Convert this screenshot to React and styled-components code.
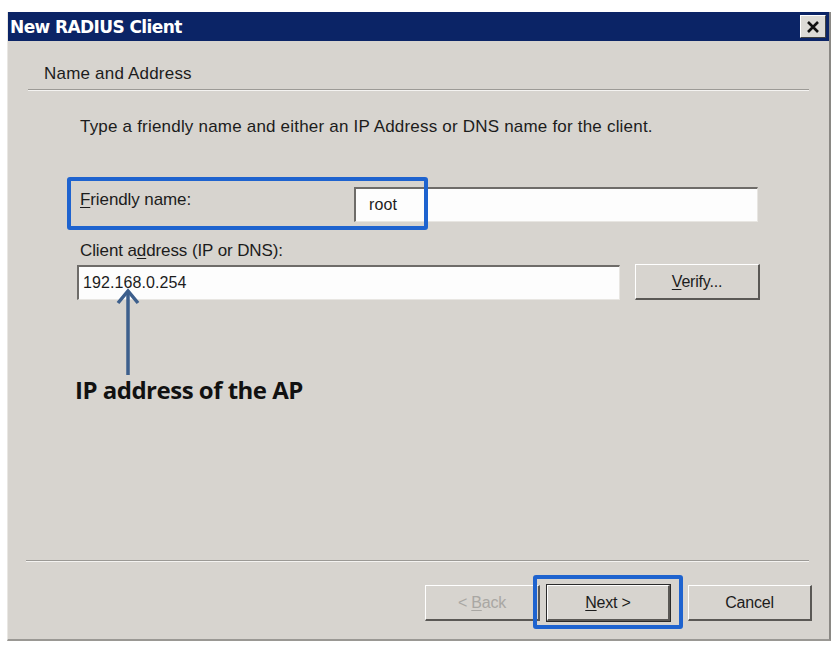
import React from 'react';
import styled, { createGlobalStyle } from 'styled-components';

const GlobalStyle = createGlobalStyle`
  html, body {
    margin: 0;
    padding: 0;
    background: #ffffff;
  }
  body {
    font-family: "Liberation Sans", Arial, sans-serif;
  }
`;

const Page = styled.div`
  padding: 12px 0 0 7px;
  width: 837px;
  height: 645px;
  box-sizing: border-box;
`;

const Window = styled.div`
  position: relative;
  width: 824px;
  height: 629px;
  box-sizing: border-box;
  background: #d7d4cf;
  border-left: 1px solid #e9e7e3;
  border-right: 2px solid #8a8884;
  border-bottom: 2px solid #9a9894;
  display: flex;
  flex-direction: column;
  color: #1c1c1c;
  font-size: 17px;
`;

const TitleBar = styled.div`
  height: 29px;
  background: #0b2466;
  display: flex;
  align-items: center;
  justify-content: space-between;
  padding: 0 3px 0 2px;
`;

const Title = styled.span`
  color: #ffffff;
  font-family: "DejaVu Sans", sans-serif;
  font-weight: bold;
  font-size: 17px;
  letter-spacing: -0.6px;
`;

const CloseButton = styled.div`
  width: 26px;
  height: 23px;
  box-sizing: border-box;
  background: #dcdad6;
  border-top: 1px solid #ffffff;
  border-left: 1px solid #ffffff;
  border-right: 1px solid #404040;
  border-bottom: 1px solid #404040;
  display: flex;
  align-items: center;
  justify-content: center;
`;

const Header = styled.div`
  height: 48px;
  display: flex;
  align-items: center;
  padding-left: 36px;
  padding-top: 17px;
  box-sizing: border-box;
  letter-spacing: 0.2px;
`;

const Separator = styled.div`
  margin: 0 20px 0 ${({ $left }) => $left}px;
  height: 0;
  border-top: 1px solid #9c9a96;
  border-bottom: 1px solid #f4f3f1;
`;

const Body = styled.div`
  flex: 1;
  padding: 26px 0 0 72px;
  display: flex;
  flex-direction: column;
`;

const Intro = styled.div`
  letter-spacing: 0.2px;
  margin-bottom: 50px;
`;

const NameRow = styled.div`
  display: flex;
  align-items: center;
  height: 35px;
`;

const Label = styled.div`
  width: 274px;
  letter-spacing: -0.1px;
  margin-top: ${({ $up }) => ($up ? '-9px' : '0')};
`;

const Underline = styled.span`
  text-decoration: underline;
  text-underline-offset: 2px;
`;

const TextField = styled.div`
  width: ${({ $width }) => $width}px;
  height: 35px;
  box-sizing: border-box;
  background: #fdfdfd;
  border-top: 2px solid #6e6c69;
  border-left: 2px solid #6e6c69;
  border-right: 1px solid #e8e6e2;
  border-bottom: 1px solid #e8e6e2;
  display: flex;
  align-items: center;
  padding-left: ${({ $pad }) => $pad}px;
  font-size: 16px;
  letter-spacing: 0.1px;
`;

const AddressLabel = styled(Label)`
  width: auto;
  margin: 19px 0 3px 0;
`;

const AddressRow = styled.div`
  display: flex;
  align-items: center;
  gap: 15px;
  margin-left: -3px;
`;

const Button = styled.div`
  width: ${({ $width }) => $width || 124}px;
  height: 36px;
  margin-left: ${({ $gap }) => $gap || 0}px;
  box-sizing: border-box;
  background: #d7d4cf;
  border-top: 1px solid #ffffff;
  border-left: 1px solid #ffffff;
  border-right: 2px solid #5a5855;
  border-bottom: 2px solid #5a5855;
  display: flex;
  align-items: center;
  justify-content: center;
  font-size: 16px;
  letter-spacing: -0.2px;
  color: ${({ $disabled }) => ($disabled ? '#a9a7a3' : '#1c1c1c')};
  ${({ $default }) => $default && 'outline: 1px solid #2a2a2a;'}
`;

const Footer = styled.div`
  height: 77px;
  display: flex;
  justify-content: flex-end;
  align-items: flex-start;
  padding: 23px 17px 0 0;
  box-sizing: border-box;
`;

const Highlight = styled.div`
  position: absolute;
  border: 4px solid #1e63cf;
  border-radius: 3px;
  box-sizing: border-box;
  pointer-events: none;
`;

const Arrow = styled.svg`
  position: absolute;
  left: 102px;
  top: 275px;
`;

const Callout = styled.div`
  position: absolute;
  left: 67px;
  top: 361px;
  font-family: "Open Sans", sans-serif;
  font-weight: 700;
  font-size: 24px;
  letter-spacing: -0.5px;
  color: #111111;
`;

const App = () => (
  <>
    <GlobalStyle />
    <Page>
      <Window>
        <TitleBar>
          <Title>New RADIUS Client</Title>
          <CloseButton>
            <svg width="14" height="12" viewBox="0 0 14 12">
              <path d="M2 1 L12 11 M12 1 L2 11" stroke="#111" strokeWidth="2.6" />
            </svg>
          </CloseButton>
        </TitleBar>
        <Header>Name and Address</Header>
        <Separator $left={20} />
        <Body>
          <Intro>Type a friendly name and either an IP Address or DNS name for the client.</Intro>
          <NameRow>
            <Label $up>
              <Underline>F</Underline>riendly name:
            </Label>
            <TextField $width={404} $pad={13}>root</TextField>
          </NameRow>
          <AddressLabel>
            Client a<Underline>d</Underline>dress (IP or DNS):
          </AddressLabel>
          <AddressRow>
            <TextField $width={543} $pad={4}>192.168.0.254</TextField>
            <Button $width={125}>
              <span>
                <Underline>V</Underline>erify...
              </span>
            </Button>
          </AddressRow>
        </Body>
        <Separator $left={18} />
        <Footer>
          <Button $width={115} $disabled>
            <span>
              &lt; <Underline>B</Underline>ack
            </span>
          </Button>
          <Button $width={123} $gap={7} $default>
            <span>
              <Underline>N</Underline>ext &gt;
            </span>
          </Button>
          <Button $width={124} $gap={18}>Cancel</Button>
        </Footer>

        <Highlight style={{ left: 59, top: 165, width: 361, height: 53 }} />
        <Highlight style={{ left: 525, top: 563, width: 150, height: 54 }} />
        <Arrow width="36" height="92" viewBox="0 0 36 92">
          <path d="M18 4 L18 88" stroke="#3d5f8c" strokeWidth="3.5" />
          <path d="M8 16 L18 4 L28 16" fill="none" stroke="#3d5f8c" strokeWidth="3.5" />
        </Arrow>
        <Callout>IP address of the AP</Callout>
      </Window>
    </Page>
  </>
);

export default App;
